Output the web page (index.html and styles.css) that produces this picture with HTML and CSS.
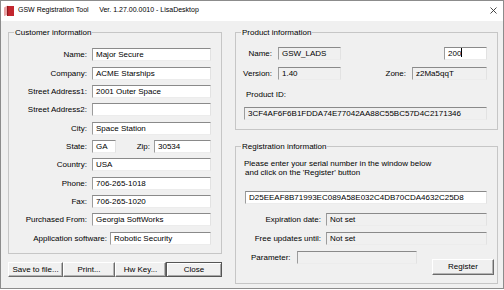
FILE: index.html
```html
<!DOCTYPE html>
<html lang="en">
<head>
<meta charset="utf-8">
<title>GSW Registration Tool</title>
<link rel="stylesheet" href="styles.css">
</head>
<body>
<div class="window">
  <div class="titlebar">
    <svg class="app-icon" width="10" height="11" viewBox="0 0 10 11">
      <polygon points="0,2.5 3.5,0.5 3.5,10 0,11" fill="#e9a3a5"/>
      <rect x="3" y="1" width="7" height="10" fill="#c3262e"/>
      <rect x="3" y="1" width="1.2" height="10" fill="#8e1a20"/>
    </svg>
    <span class="title name">GSW Registration Tool</span>
    <span class="title ver">Ver. 1.27.00.0010 - LisaDesktop</span>
    <svg class="close" width="7" height="7" viewBox="0 0 7 7">
      <path d="M0.5 0.5 L6.5 6.5 M6.5 0.5 L0.5 6.5" stroke="#333" stroke-width="0.9" fill="none"/>
    </svg>
  </div>
  <div class="client">
    <div class="col-left">
      <fieldset class="group">
        <legend>Customer information</legend>
        <div class="cform">
          <div class="crow"><span class="clbl">Name:</span><span class="field w-main">Major Secure</span></div>
          <div class="crow"><span class="clbl">Company:</span><span class="field w-main">ACME Starships</span></div>
          <div class="crow"><span class="clbl">Street Address1:</span><span class="field w-main">2001 Outer Space</span></div>
          <div class="crow"><span class="clbl">Street Address2:</span><span class="field w-main"></span></div>
          <div class="crow"><span class="clbl">City:</span><span class="field w-main">Space Station</span></div>
          <div class="crow"><span class="clbl">State:</span><span class="field w-state">GA</span><span class="zip-lbl">Zip:</span><span class="field w-zip">30534</span></div>
          <div class="crow"><span class="clbl">Country:</span><span class="field w-main">USA</span></div>
          <div class="crow"><span class="clbl">Phone:</span><span class="field w-main">706-265-1018</span></div>
          <div class="crow"><span class="clbl">Fax:</span><span class="field w-main">706-265-1020</span></div>
          <div class="crow"><span class="clbl">Purchased From:</span><span class="field w-main">Georgia SoftWorks</span></div>
          <div class="crow"><span class="clbl app-lbl">Application software:</span><span class="field w-app">Robotic Security</span></div>
        </div>
      </fieldset>
      <div class="buttons">
        <span class="btn b-save">Save to file...</span>
        <span class="btn b-print">Print...</span>
        <span class="btn b-hw">Hw Key...</span>
        <span class="btn default b-close">Close</span>
      </div>
    </div>
    <div class="col-right">
      <fieldset class="group">
        <legend>Product information</legend>
        <div class="pform">
          <div class="prow">
            <span class="plbl">Name:</span><span class="field ro w-pname">GSW_LADS</span>
            <span class="field w-200">200<span class="caret"></span></span>
          </div>
          <div class="prow">
            <span class="plbl">Version:</span><span class="field ro w-pname">1.40</span>
            <span class="zone-lbl">Zone:</span><span class="field ro w-zone">z2Ma5qqT</span>
          </div>
          <div class="pid-lbl">Product ID:</div>
          <div class="field ro w-pid">3CF4AF6F6B1FDDA74E77042AA88C55BC57D4C2171346</div>
        </div>
      </fieldset>
      <fieldset class="group reg">
        <legend>Registration information</legend>
        <div class="rform">
          <div class="rtext">Please enter your serial number in the window below<br><span class="indent">and click on the 'Register' button</span></div>
          <div class="field w-serial">D25EEAF8B71993EC089A58E032C4DB70CDA4632C25D8</div>
          <div class="rrow first"><span class="rlbl">Expiration date:</span><span class="field ro w-rval">Not set</span></div>
          <div class="rrow"><span class="rlbl">Free updates until:</span><span class="field ro w-rval">Not set</span></div>
          <div class="param-row">
            <span class="param-lbl">Parameter:</span><span class="field ro w-param"></span>
            <span class="btn b-register">Register</span>
          </div>
        </div>
      </fieldset>
    </div>
  </div>
</div>
</body>
</html>
```

FILE: styles.css
```css
* { box-sizing: border-box; }
html, body { margin: 0; padding: 0; }
body {
  width: 504px;
  height: 290px;
  overflow: hidden;
  background: #ffffff;
  font-family: "Liberation Sans", Arial, sans-serif;
  font-size: 8px;
  color: #000;
}
.window {
  width: 504px;
  height: 289px;
  border: 1px solid #8c8c8c;
  background: #f0f0f0;
  display: flex;
  flex-direction: column;
}
.titlebar {
  flex: none;
  height: 20px;
  background: #fff;
  display: flex;
  align-items: center;
  padding-bottom: 2px;
}
.app-icon { flex: none; margin-left: 3px; }
.title { font-size: 7px; line-height: 10px; white-space: nowrap; color: #000; }
.title.name { margin-left: 4px; }
.title.ver { margin-left: 10.5px; }
.close { flex: none; margin-left: auto; margin-right: 6px; }

.client {
  display: flex;
  gap: 13px;
  padding: 6px 0 0 7px;
}
.col-left { flex: none; width: 214px; }
.col-right { flex: none; width: 263px; }

fieldset.group {
  margin: 0;
  padding: 0;
  min-width: 0;
  border: 1px solid #c6c6c6;
}
fieldset.group legend {
  margin-left: 5px;
  padding: 0 1px;
  font-size: 8px;
  line-height: 11px;
}

.field {
  display: block;
  flex: none;
  height: 13px;
  line-height: 11px;
  padding-left: 3px;
  border-style: solid;
  border-width: 1px;
  border-color: #8a8a8a #e2e2e2 #ececec #9c9c9c;
  background: #fff;
  white-space: nowrap;
  overflow: hidden;
}
.field.ro { background: #f0f0f0; }

/* customer */
.cform { height: 215px; padding-top: 7.5px; }
.crow { display: flex; align-items: center; height: 18.35px; }
.clbl { flex: none; width: 78px; margin-right: 5px; text-align: right; white-space: nowrap; }
.clbl.app-lbl { width: 98px; margin-right: 3px; }
.w-main { width: 119px; }
.w-state { width: 24px; }
.zip-lbl { flex: none; width: 34px; margin-right: 4px; text-align: right; }
.w-zip { width: 57px; }
.w-app { width: 101px; }

.buttons { display: flex; margin-top: 8px; }
.btn {
  display: block;
  flex: none;
  height: 15px;
  line-height: 13px;
  text-align: center;
  white-space: nowrap;
  background: #f0f0f0;
  border: 1px solid;
  border-color: #ffffff #6b6b6b #6b6b6b #ffffff;
  box-shadow: inset -1px -1px 0 #b4b4b4;
}
.btn.default {
  border-color: #555;
  box-shadow: inset 1px 1px 0 #fff, inset -1px -1px 0 #a8a8a8;
}
.b-save { width: 55px; }
.b-print { width: 52px; }
.b-hw { width: 51px; }
.b-close { width: 56px; }

/* product */
.pform { height: 91px; padding: 9px 10px 0 0; }
.prow { display: flex; align-items: center; height: 13px; }
.prow + .prow { margin-top: 6.5px; }
.plbl { flex: none; width: 36px; margin-right: 6px; text-align: right; }
.w-pname { width: 63px; }
.w-200 { width: 43px; margin-left: auto; position: relative; }
.caret {
  display: inline-block;
  width: 1px;
  height: 9px;
  background: #000;
  vertical-align: -1px;
}
.zone-lbl { margin-left: auto; margin-right: 6px; }
.w-zone { width: 75px; }
.pid-lbl { margin: 10.5px 0 0 10px; line-height: 10px; }
.w-pid { width: 243px; margin: 6.7px 0 0 8px; }

/* registration */
fieldset.group.reg { margin-top: 11px; }
.rform { height: 131px; padding-top: 8px; }
.rtext { padding-left: 8px; line-height: 8.5px; white-space: nowrap; }
.rtext .indent { padding-left: 1px; }
.w-serial { width: 242px; margin: 14px 0 0 9px; background: #fff; }
.rrow { display: flex; align-items: center; margin-top: 6px; }
.rrow.first { margin-top: 8.7px; }
.rlbl { flex: none; width: 85px; margin-right: 5px; text-align: right; white-space: nowrap; }
.w-rval { width: 161px; }
.param-row { display: flex; align-items: flex-start; margin-top: 6.3px; }
.param-lbl { flex: none; width: 61px; padding-left: 15px; line-height: 13px; white-space: nowrap; }
.w-param { width: 120px; }
.b-register { width: 62px; height: 16px; line-height: 14px; margin: 8.3px 0 0 15px; }
```
